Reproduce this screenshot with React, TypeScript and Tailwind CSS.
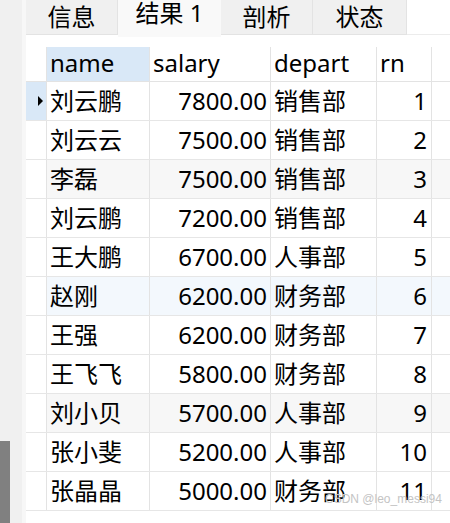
const rows = [
  ["刘云鹏", "7800.00", "销售部", "1"],
  ["刘云云", "7500.00", "销售部", "2"],
  ["李磊", "7500.00", "销售部", "3"],
  ["刘云鹏", "7200.00", "销售部", "4"],
  ["王大鹏", "6700.00", "人事部", "5"],
  ["赵刚", "6200.00", "财务部", "6"],
  ["王强", "6200.00", "财务部", "7"],
  ["王飞飞", "5800.00", "财务部", "8"],
  ["刘小贝", "5700.00", "人事部", "9"],
  ["张小斐", "5200.00", "人事部", "10"],
  ["张晶晶", "5000.00", "财务部", "11"],
];

const tabs = ["信息", "结果 1", "剖析", "状态"];

function rowBg(i: number) {
  if (i === 2 || i === 8) return "bg-[#f7f7f7]";
  if (i === 5) return "bg-[#f3f8fd]";
  return "bg-white";
}

export default function App() {
  return (
    <div
      className="relative flex h-[523px] w-[450px] overflow-hidden bg-[#f0f0f0] text-black"
      style={{ fontFamily: '"Noto Sans", "Noto Sans CJK SC", sans-serif' }}
    >
      <div className="flex w-[22px] shrink-0 flex-col justify-end">
        <div className="h-[82px] w-[10px] bg-[#808080]" />
      </div>
      <div className="flex w-[4px] shrink-0 bg-[#f7f7f7]" />
      <div className="flex flex-1 flex-col">
        <div className="flex h-[37px] shrink-0 bg-white">
          {tabs.map((t, i) =>
            i === 1 ? (
              <div
                key={t}
                className="flex h-[37px] w-[103px] items-start justify-center bg-[#f9f9f9] text-[24px] leading-[26px]"
              >
                {t}
              </div>
            ) : (
              <div
                key={t}
                className={`flex h-[35px] items-start justify-center border-r border-b border-[#e3e3e3] bg-[#f0f0f0] pt-[2px] text-[24px] leading-[30px] ${
                  i === 3 ? "w-[94px]" : "w-[92px]"
                }`}
              >
                {t}
              </div>
            ),
          )}
          <div className="h-[35px] flex-1 border-b border-[#ececec] bg-white" />
        </div>
        <div className="flex-1 bg-white pt-[10px]">
          <div className="flex h-[35px] border-b border-[#e3e3e3] text-[24px] leading-[32px]">
            <div className="w-[21px] shrink-0 border-r border-[#e3e3e3]" />
            <div className="w-[103px] shrink-0 border-r border-[#e3e3e3] bg-[#d9e8f7] pl-[3px]">name</div>
            <div className="w-[121px] shrink-0 border-r border-[#e3e3e3] pl-[3px]">salary</div>
            <div className="w-[106px] shrink-0 border-r border-[#e3e3e3] pl-[3px]">depart</div>
            <div className="w-[55px] shrink-0 border-r border-[#e3e3e3] pl-[3px]">rn</div>
          </div>
          {rows.map((r, i) => (
            <div key={i} className={`flex h-[39px] border-b border-[#e6e6e6] text-[24px] leading-[37px] ${rowBg(i)}`}>
              <div
                className={`flex w-[21px] shrink-0 items-center justify-end border-r border-[#e3e3e3] pr-[3px] ${
                  i === 0 ? "bg-[#d9e8f7]" : "bg-white"
                }`}
              >
                {i === 0 && (
                  <div className="h-0 w-0 border-y-[5px] border-l-[5px] border-y-transparent border-l-black" />
                )}
              </div>
              <div className="w-[103px] shrink-0 border-r border-[#e3e3e3] pl-[3px]">{r[0]}</div>
              <div className="w-[121px] shrink-0 border-r border-[#e3e3e3] pr-[3px] text-right">{r[1]}</div>
              <div className="w-[106px] shrink-0 border-r border-[#e3e3e3] pl-[3px]">{r[2]}</div>
              <div className="w-[55px] shrink-0 border-r border-[#e3e3e3] pr-[4px] text-right">{r[3]}</div>
            </div>
          ))}
        </div>
      </div>
      <div
        className="absolute left-[325px] top-[490px] text-[12px] text-[#c4c4c4]"
        style={{ fontFamily: '"Liberation Sans", Arial, sans-serif' }}
      >
        CSDN @leo_messi94
      </div>
    </div>
  );
}
